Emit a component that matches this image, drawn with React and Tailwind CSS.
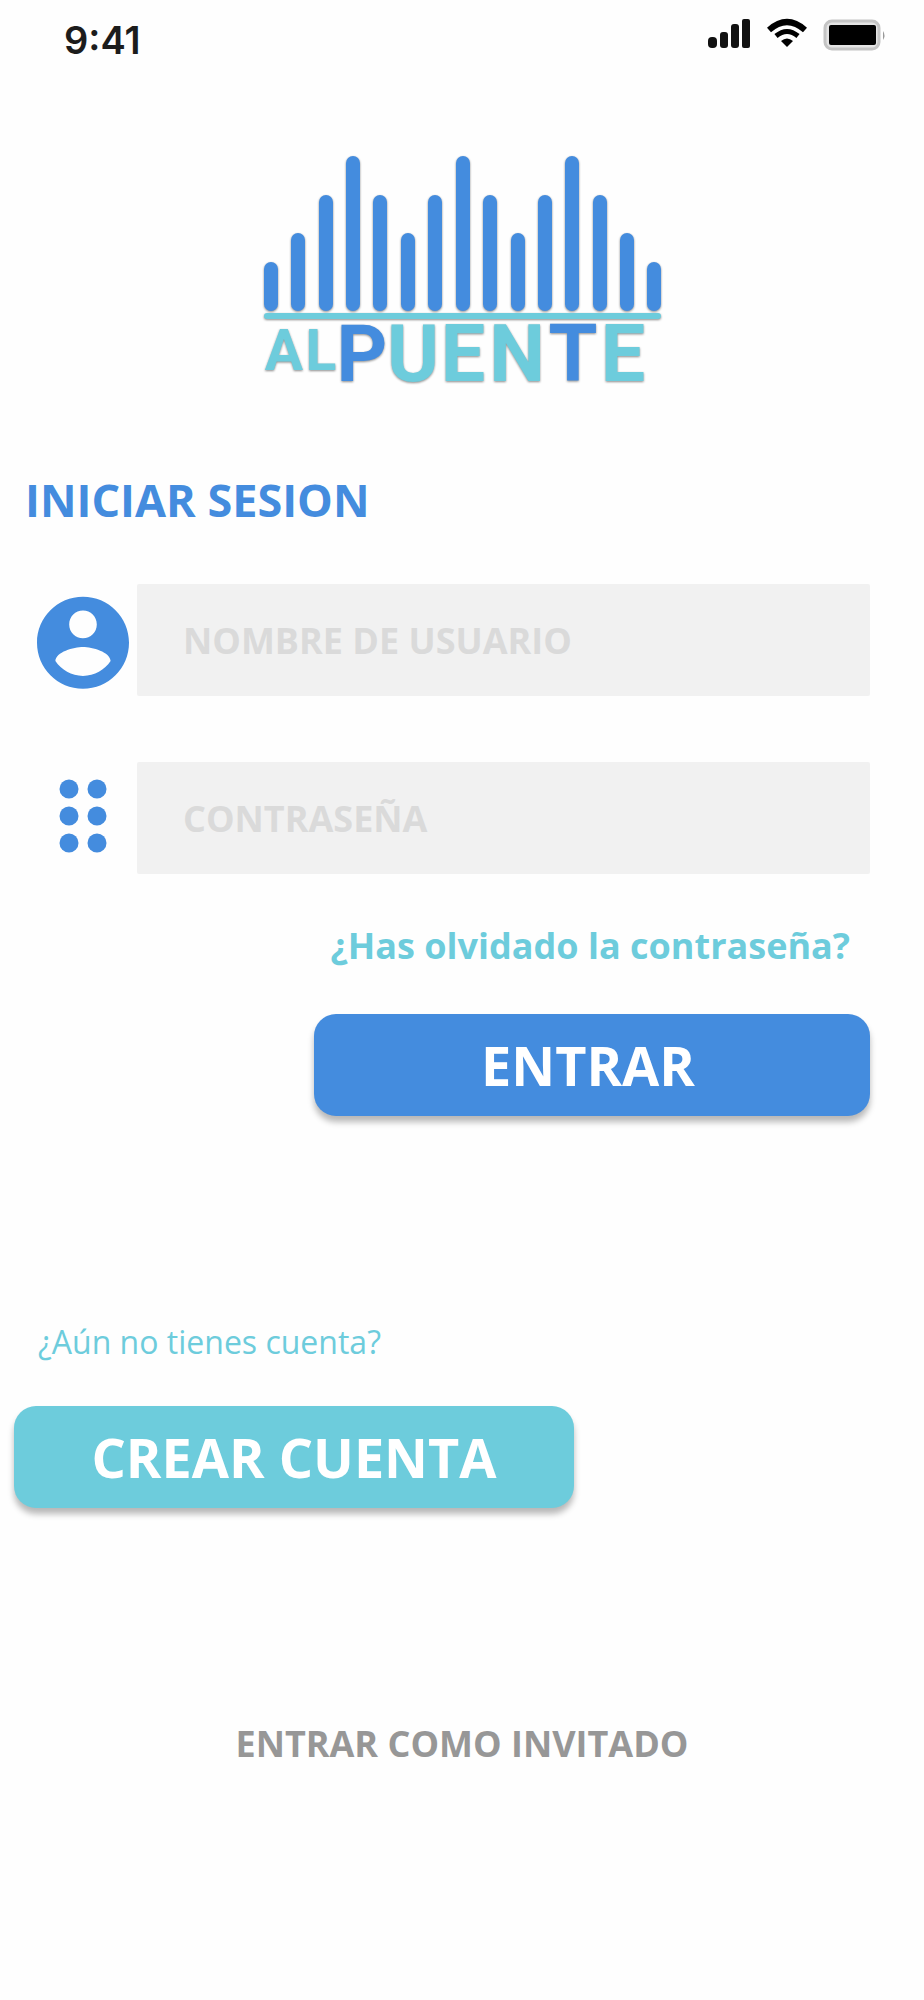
import React, { useState } from "react";

const BARS = [
  { x: 271, top: 262 },
  { x: 298, top: 233 },
  { x: 326, top: 195 },
  { x: 353, top: 156 },
  { x: 380, top: 195 },
  { x: 408, top: 233 },
  { x: 435, top: 195 },
  { x: 463, top: 156 },
  { x: 490, top: 195 },
  { x: 518, top: 233 },
  { x: 545, top: 195 },
  { x: 572, top: 156 },
  { x: 600, top: 195 },
  { x: 627, top: 233 },
  { x: 654, top: 262 },
];

const LETTERS = [
  { char: "A", x: 284, y: 370, size: 57, color: "#6dccdc" },
  { char: "L", x: 321, y: 370, size: 57, color: "#6dccdc" },
  { char: "P", x: 362, y: 381, size: 79, color: "#448cde" },
  { char: "U", x: 413, y: 381, size: 79, color: "#6dccdc" },
  { char: "E", x: 463, y: 381, size: 79, color: "#6dccdc" },
  { char: "N", x: 517, y: 381, size: 79, color: "#6dccdc" },
  { char: "T", x: 573, y: 381, size: 79, color: "#448cde" },
  { char: "E", x: 623, y: 381, size: 79, color: "#6dccdc" },
];

function Logo() {
  return (
    <svg
      viewBox="261 152 402 258"
      className="w-[402px] max-w-full h-auto drop-shadow-[0_1px_1px_rgba(0,0,0,0.45)]"
      role="img"
      aria-label="Al Puente"
    >
      {BARS.map((bar) => (
        <rect key={bar.x} x={bar.x - 7} y={bar.top} width="14" height={311 - bar.top} rx="7" fill="#448cde" />
      ))}
      <rect x="264" y="313" width="397" height="6" rx="3" fill="#6dccdc" />
      {LETTERS.map((l) => (
        <text
          key={l.x}
          x={l.x}
          y={l.y}
          fontSize={l.size}
          fill={l.color}
          textAnchor="middle"
          fontFamily="Roboto, sans-serif"
          fontWeight="700"
        >
          {l.char}
        </text>
      ))}
    </svg>
  );
}

function StatusBar() {
  return (
    <header className="flex items-start justify-between pl-16 pr-[38px] pt-4 h-20">
      <span className="font-[Inter,sans-serif] font-semibold text-[38px] leading-[48px] text-[#1c1c1c]">9:41</span>
      <svg viewBox="706 16 180 38" className="w-[180px] h-[38px]" aria-hidden="true">
        <rect x="708" y="37" width="9" height="11" rx="4" fill="#111" />
        <rect x="720" y="32" width="8" height="16" rx="3" fill="#111" />
        <rect x="731" y="24" width="8" height="24" rx="3" fill="#111" />
        <rect x="742" y="19" width="8" height="29" rx="2" fill="#111" />
        <path d="M769 30 Q787 14 805 30" fill="none" stroke="#000" strokeWidth="6" />
        <path d="M776 36 Q787 27 798 36" fill="none" stroke="#000" strokeWidth="5" />
        <path d="M781 41 Q787 36 793 41 L787 47 Z" fill="#000" />
        <rect x="825" y="21" width="54" height="28" rx="7" fill="#e4e4e4" stroke="#c4c4c4" strokeWidth="3" />
        <rect x="829" y="25" width="47" height="20" rx="2" fill="#000" />
        <path d="M883 31 Q886 35.500 883 40 Z" fill="#999" />
      </svg>
    </header>
  );
}

function UserIcon({ label }) {
  return (
    <svg viewBox="2 1 20 21" className="w-[92px] h-[97px]" fill="#448cde" role="img" aria-label={label}>
      <path d="M12 2C6.480 2 2 6.480 2 12s4.480 10 10 10 10-4.480 10-10S17.520 2 12 2zm0 3c1.660 0 3 1.340 3 3s-1.340 3-3 3-3-1.340-3-3 1.340-3 3-3zm0 14.200c-2.500 0-4.710-1.280-6-3.220.03-1.990 4-3.080 6-3.080 1.990 0 5.970 1.090 6 3.080-1.290 1.940-3.500 3.220-6 3.220z" />
    </svg>
  );
}

function DotsIcon({ label }) {
  return (
    <svg viewBox="0 0 48 80" className="w-12 h-20" fill="#448cde" role="img" aria-label={label}>
      {[11, 38, 65].map((cy) => (
        <g key={cy}>
          <circle cx="10" cy={cy} r="9.500" />
          <circle cx="38" cy={cy} r="9.500" />
        </g>
      ))}
    </svg>
  );
}

function Field({ id, icon: Icon, label, type, value, onChange }) {
  return (
    <div className="flex items-center">
      <label htmlFor={id} className="w-28 pl-1 shrink-0 flex justify-center">
        <Icon label={label} />
      </label>
      <input
        id={id}
        type={type}
        value={value}
        onChange={onChange}
        placeholder={label}
        className="flex-1 min-w-0 h-28 px-[46px] rounded-xs bg-[#f1f1f1] text-4xl font-bold text-gray-600 placeholder:text-[#dadada] outline-none"
      />
    </div>
  );
}

export default function App() {
  const [user, setUser] = useState("");
  const [password, setPassword] = useState("");

  return (
    <div className="min-h-screen bg-[#fefefe] font-['Open_Sans',sans-serif]">
      <StatusBar />

      <div className="flex justify-center mt-[72px]">
        <Logo />
      </div>

      <main>
        <form className="pl-[25px] pr-[54px]" onSubmit={(e) => e.preventDefault()}>
          <h1 className="mt-[58px] text-[45px] leading-[64px] font-bold text-[#448cde]">INICIAR SESION</h1>

          <div className="mt-[52px] flex flex-col gap-[66px]">
            <Field
              id="user"
              icon={UserIcon}
              label="NOMBRE DE USUARIO"
              type="text"
              value={user}
              onChange={(e) => setUser(e.target.value)}
            />
            <Field
              id="password"
              icon={DotsIcon}
              label="CONTRASEÑA"
              type="password"
              value={password}
              onChange={(e) => setPassword(e.target.value)}
            />
          </div>

          <div className="mt-12 flex flex-col items-end">
            <a href="#" className="mr-5 text-4xl leading-[48px] font-bold text-[#6dccdc]">
              ¿Has olvidado la contraseña?
            </a>
            <button
              type="submit"
              className="mt-11 pr-2 w-[556px] max-w-full h-[102px] rounded-[22px] bg-[#448cde] text-white text-[54px] font-bold shadow-[0_6px_6px_rgba(0,0,0,0.28)]"
            >
              ENTRAR
            </button>
          </div>
        </form>

        <section className="mt-[202px] px-[14px]">
          <p className="ml-6 text-[32px] leading-[48px] text-[#6dccdc]">¿Aún no tienes cuenta?</p>
          <button
            type="button"
            className="mt-10 w-[560px] max-w-full h-[102px] rounded-[22px] bg-[#6dccdc] text-white text-[54px] font-bold shadow-[0_6px_6px_rgba(0,0,0,0.28)]"
          >
            CREAR CUENTA
          </button>
        </section>

        <div className="mt-[212px] flex justify-center">
          <a href="#" className="text-4xl leading-[48px] font-bold text-[#979797]">
            ENTRAR COMO INVITADO
          </a>
        </div>
      </main>
    </div>
  );
}
